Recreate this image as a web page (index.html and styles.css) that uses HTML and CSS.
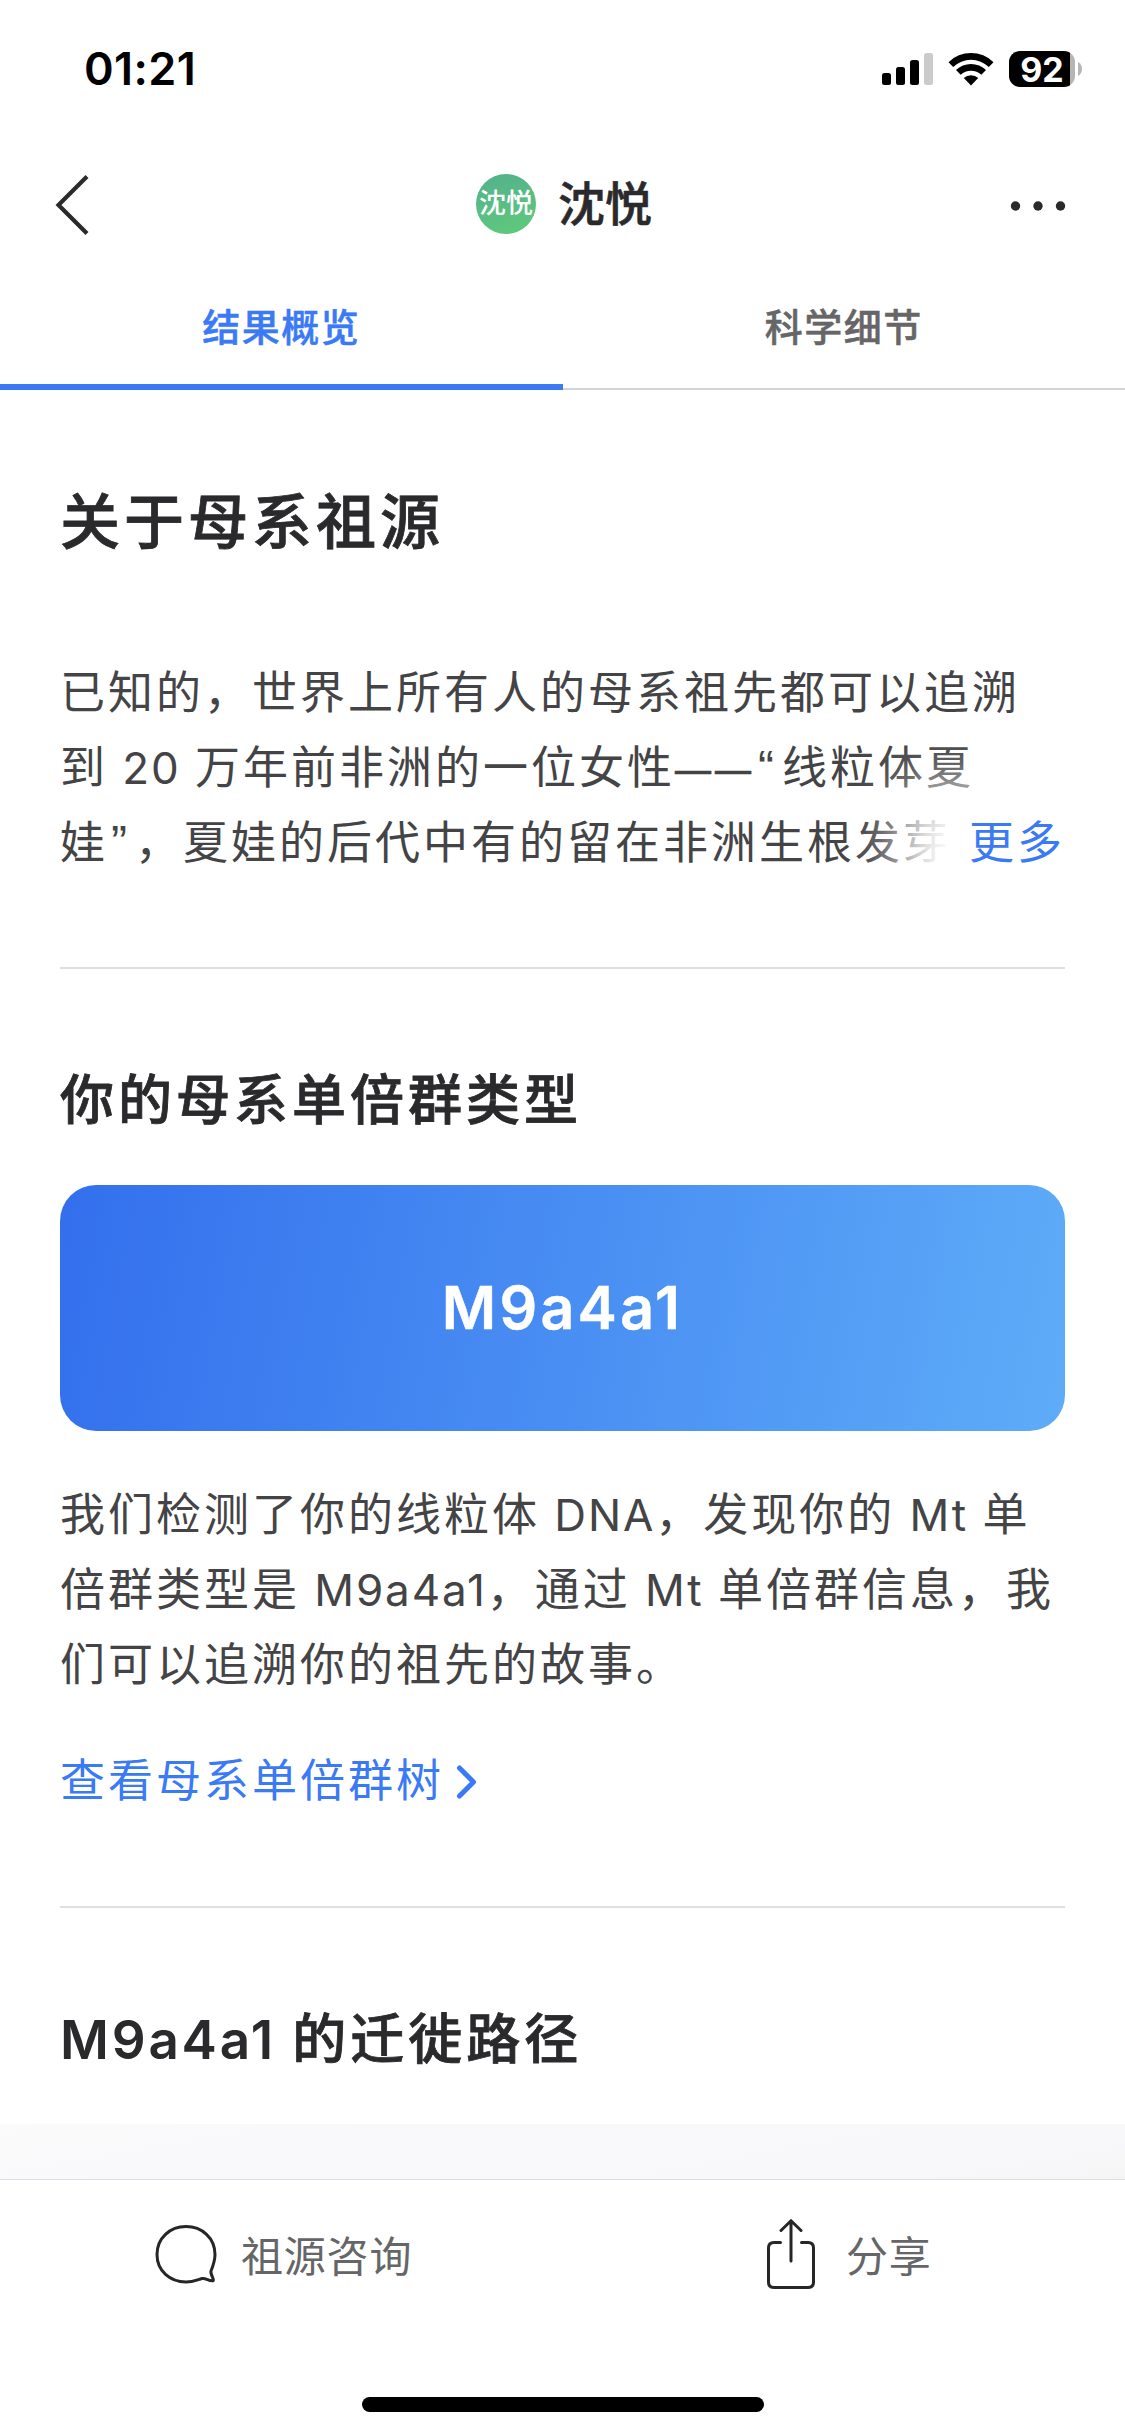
FILE: index.html
```html
<!DOCTYPE html>
<html lang="zh-CN">
<head>
    <meta charset="UTF-8">
    <meta name="viewport" content="width=device-width, initial-scale=1.0">
    <title>母系祖源</title>
    <link rel="stylesheet" href="styles.css">
</head>
<body>
    <div class="status-bar">
        <span class="time">01:21</span>
        <div class="status-icons">
            <svg class="signal" width="52" height="33" viewBox="0 0 52 33">
                <rect x="0" y="20" width="9" height="12" rx="2.5"/>
                <rect x="14" y="14" width="9" height="18" rx="2.5"/>
                <rect x="28" y="7" width="9" height="25" rx="2.5"/>
                <rect x="42" y="0" width="9" height="32" rx="2.5" fill="#cbcbcb"/>
            </svg>
            <svg class="wifi" width="46" height="34" viewBox="0 0 46 34">
                <path d="M0.500 10.200 A32 32 0 0 1 45.500 10.200 L40.800 15 A25.500 25.500 0 0 0 5.200 15 Z"/>
                <path d="M8 18 A21.500 21.500 0 0 1 38 18 L33.300 22.800 A15 15 0 0 0 12.700 22.800 Z"/>
                <path d="M15.800 26 A10.500 10.500 0 0 1 30.200 26 L23 33.500 Z"/>
            </svg>
            <div class="battery"><span>92</span></div>
            <svg class="battery-tip" width="4" height="14" viewBox="0 0 4 14">
                <path d="M0 0 C5.300 2.500 5.300 11.500 0 14 Z" fill="#b5b5b5"/>
            </svg>
        </div>
    </div>

    <div class="nav-bar">
        <svg class="back" width="34" height="62" viewBox="0 0 34 62">
            <path d="M32 2.500 L3.500 31 L32 59.500" fill="none" stroke="#2a2a2c" stroke-width="4.200"/>
        </svg>
        <div class="profile">
            <span class="avatar">沈悦</span>
            <span class="name">沈悦</span>
        </div>
        <svg class="more" width="56" height="12" viewBox="0 0 56 12">
            <circle cx="5.500" cy="6" r="4.700"/>
            <circle cx="28" cy="6" r="4.700"/>
            <circle cx="50.500" cy="6" r="4.700"/>
        </svg>
    </div>

    <div class="tabs">
        <div class="tab active">结果概览</div>
        <div class="tab">科学细节</div>
    </div>

    <div class="content">
        <h1>关于母系祖源</h1>
        <div class="intro">
            <p>已知的，世界上所有人的母系祖先都可以追溯<br>到<span class="latin"> 20 </span>万年前非洲的一位女性<span class="dash">——</span><span class="quote">“</span>线粒体夏<br>娃<span class="quote">”</span>，夏娃的后代中有的留在非洲生根发芽<span class="tail">，</span></p>
            <a class="read-more">更多</a>
        </div>
        <hr>
        <h2>你的母系单倍群类型</h2>
        <div class="haplo-card">M9a4a1</div>
        <p>我们检测了你的线粒体<span class="latin"> DNA</span>，发现你的<span class="latin"> Mt </span>单<br>倍群类型是<span class="latin"> M9a4a1</span>，通过<span class="latin"> Mt </span>单倍群信息，我<br>们可以追溯你的祖先的故事。</p>
        <a class="tree-link">查看母系单倍群树
            <svg width="22" height="34" viewBox="0 0 22 34">
                <path d="M3.500 3 L17.500 17 L3.500 31" fill="none" stroke="#3a7af5" stroke-width="5" stroke-linecap="round" stroke-linejoin="round"/>
            </svg>
        </a>
        <hr>
        <h2><span class="latin-title">M9a4a1 </span>的迁徙路径</h2>
    </div>
    <div class="map"></div>

    <div class="bottom-bar">
        <div class="actions">
            <div class="action">
                <svg width="62" height="60" viewBox="0 0 62 60">
                    <path d="M56 46 C58 41 60 36 60 29.500 C60 13 47 1.500 31 1.500 C15 1.500 2 13 2 29.500 C2 46 15 57 31 57 C38 57 43 54.500 47 53.500 C51 52.800 54 56.500 58 55.800 C60 54.500 55 50 56 46 Z" fill="none" stroke="#262628" stroke-width="3" stroke-linejoin="round"/>
                </svg>
                <span>祖源咨询</span>
            </div>
            <div class="action share">
                <svg width="50" height="72" viewBox="0 0 50 72">
                    <path d="M14.500 23.500 H8 Q2.500 23.500 2.500 29 V63 Q2.500 68.500 8 68.500 H42 Q47.500 68.500 47.500 63 V29 Q47.500 23.500 42 23.500 H35.500 M25 42 V2 M15 11.500 L25 1.700 L35 11.500" fill="none" stroke="#262628" stroke-width="3" stroke-linecap="round" stroke-linejoin="round"/>
                </svg>
                <span>分享</span>
            </div>
        </div>
        <div class="home-indicator"></div>
    </div>
</body>
</html>
```

FILE: styles.css
```css
* {
    box-sizing: border-box;
}
body {
    margin: 0;
    width: 1125px;
    height: 2436px;
    display: flex;
    flex-direction: column;
    overflow: hidden;
    background-color: #fff;
    color: #444446;
    font-family: Inter, "Noto Sans CJK SC", sans-serif;
}

/* Status bar */
.status-bar {
    height: 138px;
    flex: none;
    display: flex;
    justify-content: space-between;
    padding: 0 43px 0 84px;
    color: #000;
}
.time {
    padding-top: 42px;
    font-size: 45px;
    line-height: 54px;
    font-weight: 600;
    letter-spacing: 0.4px;
}
.status-icons {
    height: 36px;
    margin-top: 51px;
    display: flex;
    align-items: center;
}
.wifi {
    margin-left: 14px;
}
.battery {
    width: 66px;
    height: 36px;
    margin-left: 15px;
    border-radius: 11px;
    background: linear-gradient(90deg, #000 61px, #b5b5b5 61px);
    color: #fff;
    font-size: 34px;
    line-height: 37px;
    font-weight: 700;
    text-align: center;
}
.battery-tip {
    margin-left: 3px;
}

/* Nav bar */
.nav-bar {
    height: 132px;
    flex: none;
    display: flex;
    align-items: center;
    justify-content: space-between;
    padding: 1px 59px 0 55px;
}
.profile {
    display: flex;
    align-items: center;
    gap: 22px;
    margin: -2px 0 0 29px;
}
.avatar {
    width: 60px;
    height: 60px;
    border-radius: 50%;
    background: linear-gradient(165deg, #54b08c, #5ecb7c);
    color: #fff;
    font-size: 27px;
    line-height: 59px;
    font-weight: 500;
    text-align: center;
}
.name {
    color: #2a2a2c;
    font-size: 47px;
    line-height: 60px;
    font-weight: 500;
    -webkit-text-stroke: 0.6px;
}
.more {
    margin-top: 2px;
    fill: #2a2a2c;
}

/* Tabs */
.tabs {
    height: 120px;
    flex: none;
    display: flex;
}
.tab {
    flex: 1;
    border-bottom: 2px solid #d3d5da;
    color: #666668;
    font-size: 38px;
    line-height: 114px;
    font-weight: 500;
    letter-spacing: 1.5px;
    text-align: center;
    -webkit-text-stroke: 0.5px;
}
.tab.active {
    border-bottom: 6px solid #3a7af5;
    color: #3a7af5;
}

/* Content */
.content {
    height: 1734px;
    flex: none;
    padding: 87px 60px 0;
}
h1, h2 {
    margin: 0;
    color: #2a2a2c;
    font-weight: 500;
    letter-spacing: 4px;
    -webkit-text-stroke: 0.8px;
}
h1 {
    font-size: 60px;
    line-height: 90px;
}
h2 {
    margin-top: 92px;
    font-size: 54px;
    line-height: 80px;
}
p {
    margin: 0;
    font-size: 45px;
    line-height: 75px;
    letter-spacing: 3px;
    white-space: nowrap;
}
hr {
    height: 2px;
    margin: 0;
    border: 0;
    background-color: #dfdfe0;
}
.latin {
    font-size: 44px;
    line-height: 1;
    letter-spacing: 1.9px;
}
.latin-title {
    font-size: 53px;
    line-height: 1;
    font-weight: 600;
    letter-spacing: 2.8px;
    -webkit-text-stroke: 0;
}
.intro {
    position: relative;
    height: 312px;
    margin-top: 88px;
    overflow: hidden;
}
.dash {
    font-size: 36px;
    line-height: 1;
    letter-spacing: 4px;
    -webkit-text-stroke: 0.6px;
}
.quote {
    display: inline-block;
    width: 27px;
    height: 40px;
    padding-left: 3px;
    font-family: "Liberation Sans", sans-serif;
    font-size: 48px;
    line-height: 40px;
    letter-spacing: 0;
}
.tail {
    display: inline-block;
    width: 16px;
    line-height: 1;
}
.read-more {
    position: absolute;
    right: 0;
    top: 150px;
    width: 96px;
    background-color: #fff;
    box-shadow: 0 51px 50px 68px #fff;
    color: #3a7af5;
    font-size: 45px;
    line-height: 75px;
    letter-spacing: 3px;
}
.haplo-card {
    height: 246px;
    margin: 44px 0 46px;
    border-radius: 36px;
    background: linear-gradient(100deg, #336fed, #5eacf8);
    color: #fff;
    font-size: 59px;
    line-height: 246px;
    font-weight: 600;
    letter-spacing: 3.3px;
    text-align: center;
    -webkit-text-stroke: 0.5px;
}
.tree-link {
    height: 75px;
    margin: 42px 0 87px;
    display: flex;
    align-items: center;
    gap: 12px;
    color: #3a7af5;
    font-size: 45px;
    line-height: 71px;
    letter-spacing: 3px;
    padding-bottom: 2px;
}
.tree-link svg {
    margin-top: 2px;
}
.map {
    height: 55px;
    flex: none;
    background: linear-gradient(170deg, #fbfbfb, #f9f9fb 20%, #f8f8fa 85%, #f5f5f6);
}

/* Bottom bar */
.bottom-bar {
    flex: 1;
    border-top: 1px solid #dcdde0;
    background-color: #fff;
}
.actions {
    height: 217px;
    display: flex;
    padding-top: 38px;
}
.action {
    width: 611px;
    height: 74px;
    display: flex;
    align-items: center;
    gap: 24px;
    padding-left: 155px;
    color: #666668;
    font-size: 42px;
    letter-spacing: 0.8px;
}
.action span {
    padding-bottom: 4px;
}
.action.share {
    gap: 30px;
    width: auto;
}
.home-indicator {
    width: 402px;
    height: 15px;
    margin: 0 auto;
    border-radius: 8px;
    background-color: #000;
}
```
